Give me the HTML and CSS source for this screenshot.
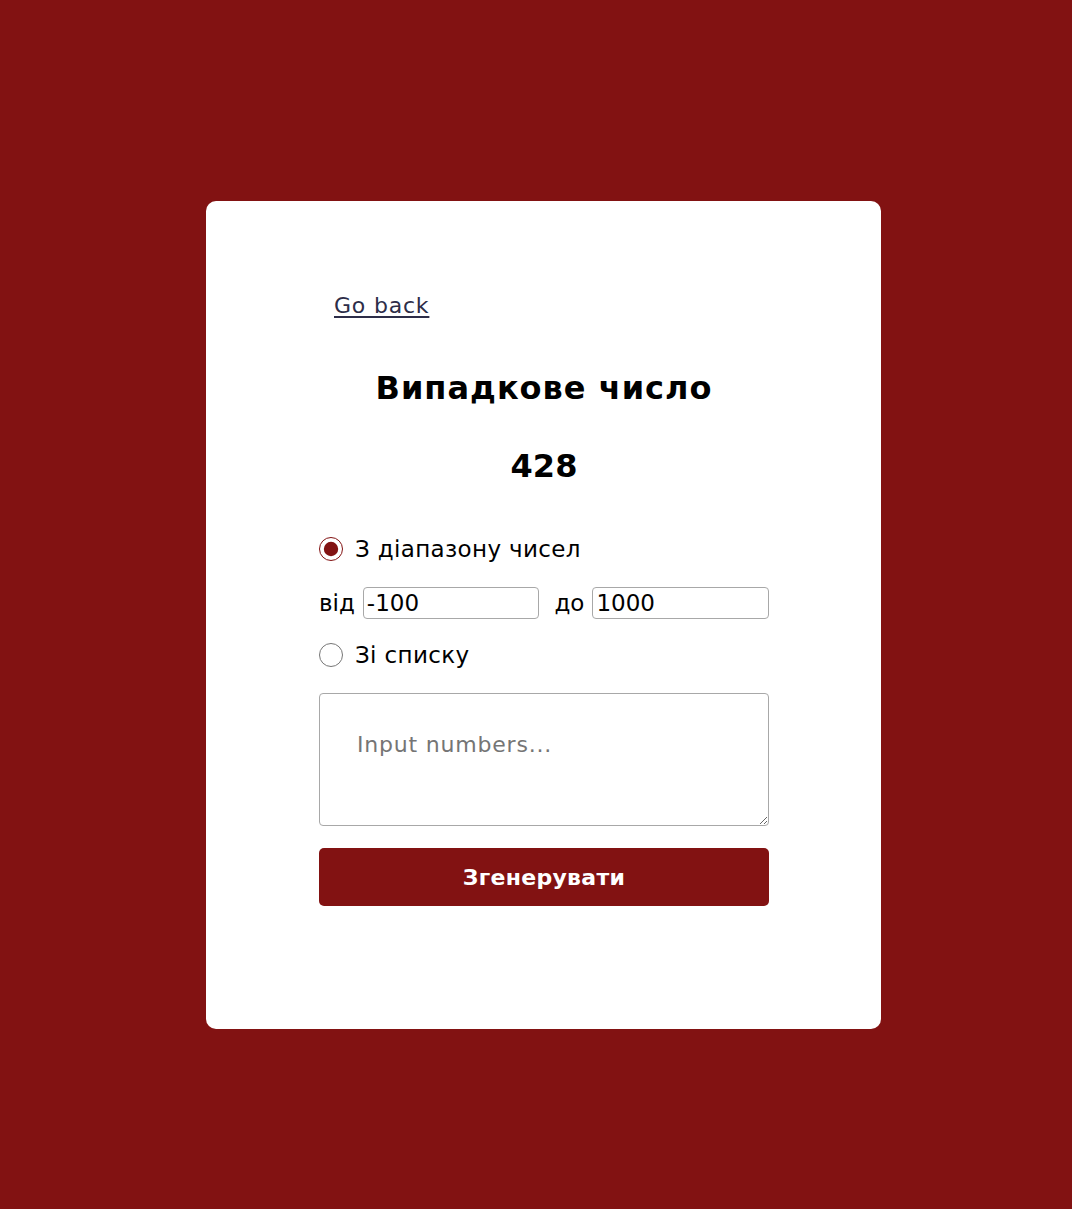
FILE: index.html
```html
<!DOCTYPE html>
<html lang="uk">
<head>
<meta charset="utf-8">
<title>Випадкове число</title>
<link rel="stylesheet" href="styles.css">
</head>
<body>
<main class="card">
  <div class="content">
    <a class="back" href="#">Go back</a>
    <h1 class="title">Випадкове число</h1>
    <div class="result">428</div>
    <label class="radio-row first">
      <input type="radio" name="mode" class="radio" checked>
      <span>З діапазону чисел</span>
    </label>
    <div class="range-row">
      <span>від</span>
      <input type="text" class="num" value="-100">
      <span class="to">до</span>
      <input type="text" class="num" value="1000">
    </div>
    <label class="radio-row">
      <input type="radio" name="mode" class="radio">
      <span>Зі списку</span>
    </label>
    <textarea class="list" placeholder="Input numbers..."></textarea>
    <button class="generate">Згенерувати</button>
  </div>
</main>
</body>
</html>
```
FILE: styles.css
```css
html, body {
  margin: 0;
  padding: 0;
}
body {
  background: #821212;
  min-height: 1209px;
  padding-left: 15px;
  box-sizing: border-box;
  font-family: "DejaVu Sans", "Open Sans", sans-serif;
  color: #000;
}
.card {
  width: 675px;
  height: 828px;
  margin: 201px auto 0;
  background: #fff;
  border-radius: 10px;
  box-sizing: border-box;
  padding: 90px 112px 0 113px;
}
.content {
  display: flex;
  flex-direction: column;
}
.back {
  align-self: flex-start;
  margin-left: 15px;
  font-size: 22px;
  line-height: 30px;
  letter-spacing: 0.8px;
  color: #2d2d48;
  text-decoration: underline;
  text-underline-offset: 3px;
}
.title {
  margin: 47px 0 0;
  text-align: center;
  font-size: 32px;
  line-height: 40px;
  font-weight: 600;
  letter-spacing: 1px;
}
.result {
  margin-top: 38px;
  text-align: center;
  font-size: 32px;
  line-height: 40px;
  font-weight: 600;
}
.radio-row {
  display: flex;
  align-items: center;
  gap: 12px;
  font-size: 23px;
  line-height: 32px;
  letter-spacing: 0.35px;
}
.radio-row.first {
  margin-top: 47px;
}
.radio {
  margin: 0;
  width: 24px;
  height: 24px;
  accent-color: #821212;
}
.range-row {
  margin: 22px 0 20px;
  display: flex;
  align-items: center;
  font-size: 23px;
  line-height: 32px;
}
.range-row span {
  margin-right: 8px;
}
.range-row .to {
  margin-left: 15px;
}
.num {
  flex: 1;
  min-width: 0;
  height: 32px;
  box-sizing: border-box;
  border: 1px solid #a8a8a8;
  border-radius: 4px;
  padding: 0 3px;
  font-family: inherit;
  font-size: 23px;
  color: #000;
}
.list {
  margin-top: 22px;
  height: 133px;
  box-sizing: border-box;
  border: 1px solid #a8a8a8;
  border-radius: 4px;
  padding: 38px 37px;
  font-family: inherit;
  font-size: 22px;
  letter-spacing: 0.8px;
  resize: vertical;
}
.list::placeholder {
  color: #757575;
}
.generate {
  margin-top: 22px;
  height: 58px;
  border: 0;
  border-radius: 5px;
  background: #821212;
  color: #fff;
  font-family: inherit;
  font-size: 22px;
  font-weight: 700;
  letter-spacing: 0.3px;
}
```
